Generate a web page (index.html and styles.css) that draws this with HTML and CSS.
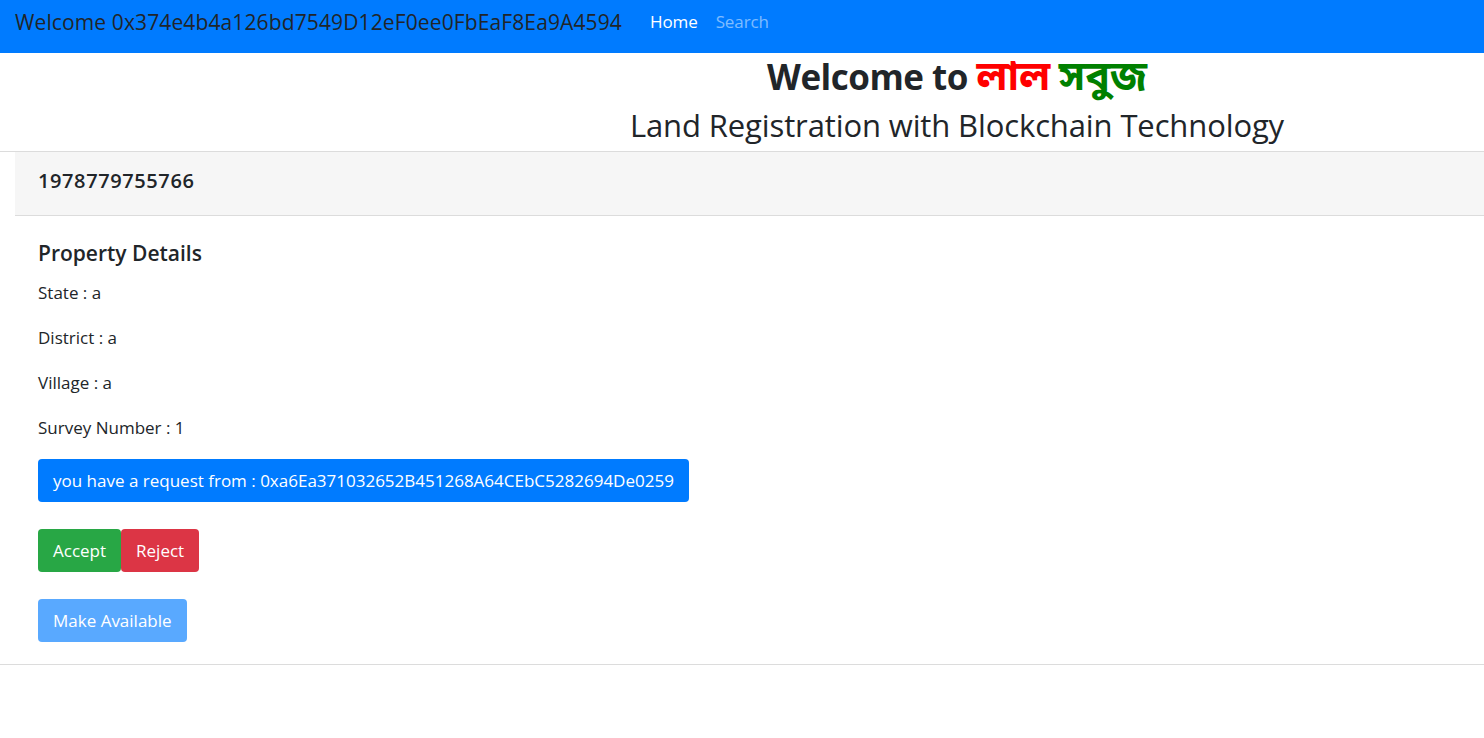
FILE: index.html
```html
<!DOCTYPE html>
<html>
<head>
<meta charset="utf-8">
<link rel="stylesheet" href="styles.css">
</head>
<body>
<nav class="navbar">
  <span class="brand">Welcome 0x374e4b4a126bd7549D12eF0ee0FbEaF8Ea9A4594</span>
  <a class="nav-link active">Home</a>
  <a class="nav-link">Search</a>
</nav>
<header class="hero">
  <h1 class="hero-title">Welcome to <span class="bn red">লাল</span> <span class="bn green">সবুজ</span></h1>
  <h2 class="hero-sub">Land Registration with Blockchain Technology</h2>
</header>
<section class="card">
  <div class="card-header">1978779755766</div>
  <div class="card-body">
    <h5 class="card-title">Property Details</h5>
    <p class="field">State : a</p>
    <p class="field">District : a</p>
    <p class="field">Village : a</p>
    <p class="field">Survey Number : 1</p>
    <div class="row"><button class="btn btn-primary">you have a request from : 0xa6Ea371032652B451268A64CEbC5282694De0259</button></div>
    <div class="row"><button class="btn btn-success">Accept</button><button class="btn btn-danger">Reject</button></div>
    <div class="row"><button class="btn btn-primary disabled">Make Available</button></div>
  </div>
</section>
</body>
</html>
```
FILE: styles.css
```css
body {
  margin: 0;
  font-family: "Open Sans", "Noto Sans", "Noto Sans Bengali", sans-serif;
  color: #212529;
  font-size: 16px;
}
.navbar {
  background: #007bff;
  height: 53px;
  box-sizing: border-box;
  padding: 7px 16px 0 15px;
  display: flex;
  align-items: flex-start;
}
.brand {
  font-size: 21px;
  line-height: 30px;
  color: #212529;
  margin-right: 19px;
  letter-spacing: 0.12px;
}
.nav-link {
  font-size: 17px;
  line-height: 30px;
  padding: 0 9px;
  color: rgba(255,255,255,0.5);
  letter-spacing: -0.1px;
}
.nav-link.active { color: #fff; }
.hero {
  padding-left: 430px;
  text-align: center;
  border-bottom: 1px solid #dcdcdc;
  height: 99px;
  box-sizing: border-box;
}
.hero-title {
  margin: 0;
  height: 48px;
  font-size: 35px;
  line-height: 48px;
  font-weight: 700;
  letter-spacing: -0.5px;
}
.bn { font-size: 41px; line-height: 1; letter-spacing: 0; }
.red { color: #ff0000; }
.green { color: #008000; }
.hero-sub {
  margin: 0;
  height: 48px;
  font-size: 31px;
  line-height: 48px;
  font-weight: 500;
  letter-spacing: -0.12px;
}
.card {
  border-bottom: 1px solid #dcdcdc;
  padding-bottom: 22px;
}
.card-header {
  margin-left: 15px;
  background: #f6f6f6;
  border-bottom: 1px solid #dcdcdc;
  height: 64px;
  box-sizing: border-box;
  padding: 15px 23px 0;
  font-size: 20px;
  line-height: 28px;
  font-weight: 600;
  letter-spacing: 0.6px;
}
.card-body {
  padding: 23px 38px 0;
}
.card-title {
  margin: 0 0 14px;
  font-size: 21px;
  line-height: 28px;
  font-weight: 600;
  letter-spacing: 0;
}
.field {
  margin: 0 0 21px;
  font-size: 17px;
  line-height: 24px;
  letter-spacing: 0;
}
.field:nth-of-type(4) { margin-bottom: 19px; }
.row {
  display: flex;
  margin-bottom: 27px;
}
.row:last-child { margin-bottom: 0; }
.btn {
  font-family: inherit;
  border: 0;
  border-radius: 4px;
  color: #fff;
  height: 43px;
  padding: 0 15px;
  font-size: 17px;
  letter-spacing: 0;
  cursor: pointer;
}
.btn-primary { background: #007bff; }
.btn-success { background: #28a745; }
.btn-danger { background: #dc3545; }
.btn-primary.disabled { background: #59a9ff; }
```
